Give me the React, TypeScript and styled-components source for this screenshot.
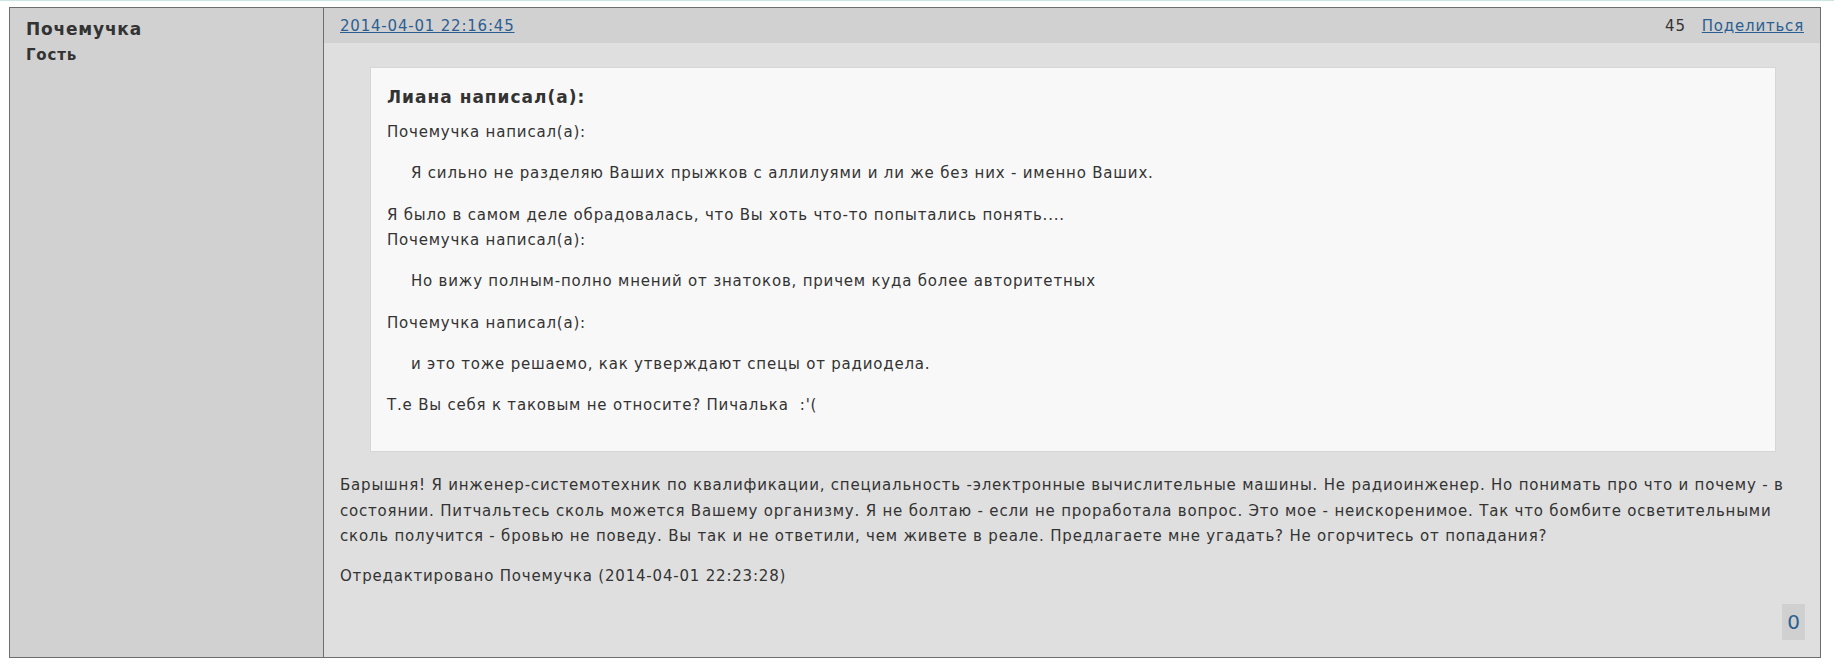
import React from "react";
import styled, { createGlobalStyle } from "styled-components";

const GlobalStyle = createGlobalStyle`
    body {
        margin: 0;
        background: #fff;
        font-family: "DejaVu Sans", Verdana, "Noto Sans", sans-serif;
        font-size: 15px;
        letter-spacing: 0.8px;
        color: #333;
    }
`;

const Page = styled.div`
    border-top: 1px solid #cbe4e4;
    padding: 6px 13px 0 9px;
`;

const Post = styled.div`
    display: grid;
    grid-template-columns: 314px 1fr;
    border: 1px solid #6e6e6e;
    background: #dfdfdf;
`;

const Author = styled.div`
    background: #d1d1d1;
    border-right: 1px solid #6e6e6e;
    padding: 9px 16px;
`;

const AuthorName = styled.div`
    font-size: 17px;
    font-weight: 700;
    letter-spacing: 0.8px;
    line-height: 25px;
`;

const AuthorRole = styled.div`
    font-size: 15px;
    font-weight: 700;
    line-height: 25px;
    margin-top: 1px;
`;

const Main = styled.div`
    display: flex;
    flex-direction: column;
`;

const PostHead = styled.div`
    display: flex;
    align-items: center;
    justify-content: space-between;
    height: 35px;
    padding: 0 16px;
    background: #d1d1d1;
`;

const Link = styled.a`
    color: #2b5f91;
    text-decoration: underline;
`;

const HeadRight = styled.div`
    display: flex;
    gap: 16px;
`;

const Body = styled.div`
    padding: 24px 16px 0;
`;

const QuoteBox = styled.div`
    margin: 0 28px 21px 30px;
    padding: 17px 16px 0;
    background: #f8f8f8;
    border: 1px solid #d6d6d6;
`;

const Cite = styled.div`
    font-size: 17px;
    font-weight: 700;
    letter-spacing: 1px;
    line-height: 24px;
    margin-bottom: 11px;
`;

const Para = styled.p<{ $indent?: boolean }>`
    margin: 0 0 16.4px;
    padding-left: ${(p) => (p.$indent ? "24px" : "0")};
    line-height: 25px;
`;

const LastPara = styled(Para)`
    margin-bottom: 33px;
`;

const Text = styled.p`
    margin: 0 0 14.5px;
    line-height: 25.5px;
`;

const Footer = styled.div`
    display: flex;
    justify-content: flex-end;
    padding: 0 15px 17px;
`;

const Votes = styled.span`
    display: flex;
    align-items: center;
    justify-content: center;
    width: 23px;
    height: 36px;
    background: #d0d0d0;
    color: #2b5f91;
    font-size: 20px;
    letter-spacing: 0;
`;

export default function App() {
    return (
        <>
            <GlobalStyle />
            <Page>
                <Post>
                    <Author>
                        <AuthorName>Почемучка</AuthorName>
                        <AuthorRole>Гость</AuthorRole>
                    </Author>
                    <Main>
                        <PostHead>
                            <Link href="#">2014-04-01 22:16:45</Link>
                            <HeadRight>
                                <span>45</span>
                                <Link href="#">Поделиться</Link>
                            </HeadRight>
                        </PostHead>
                        <Body>
                            <QuoteBox>
                                <Cite>Лиана написал(а):</Cite>
                                <Para>Почемучка написал(а):</Para>
                                <Para $indent>Я сильно не разделяю Ваших прыжков с аллилуями и ли же без них - именно Ваших.</Para>
                                <Para>
                                    Я было в самом деле обрадовалась, что Вы хоть что-то попытались понять....
                                    <br />
                                    Почемучка написал(а):
                                </Para>
                                <Para $indent>Но вижу полным-полно мнений от знатоков, причем куда более авторитетных</Para>
                                <Para>Почемучка написал(а):</Para>
                                <Para $indent>и это тоже решаемо, как утверждают спецы от радиодела.</Para>
                                <LastPara>Т.е Вы себя к таковым не относите? Пичалька&nbsp; :'(</LastPara>
                            </QuoteBox>
                            <Text>
                                Барышня! Я инженер-системотехник по квалификации, специальность -электронные вычислительные машины. Не радиоинженер. Но понимать про что и почему - в состоянии. Питчальтесь сколь можется Вашему организму. Я не болтаю - если не проработала вопрос. Это мое - неискоренимое. Так что бомбите осветительными сколь получится - бровью не поведу. Вы так и не ответили, чем живете в реале. Предлагаете мне угадать? Не огорчитесь от попадания?
                            </Text>
                            <Text>Отредактировано Почемучка (2014-04-01 22:23:28)</Text>
                        </Body>
                        <Footer>
                            <Votes>0</Votes>
                        </Footer>
                    </Main>
                </Post>
            </Page>
        </>
    );
}
